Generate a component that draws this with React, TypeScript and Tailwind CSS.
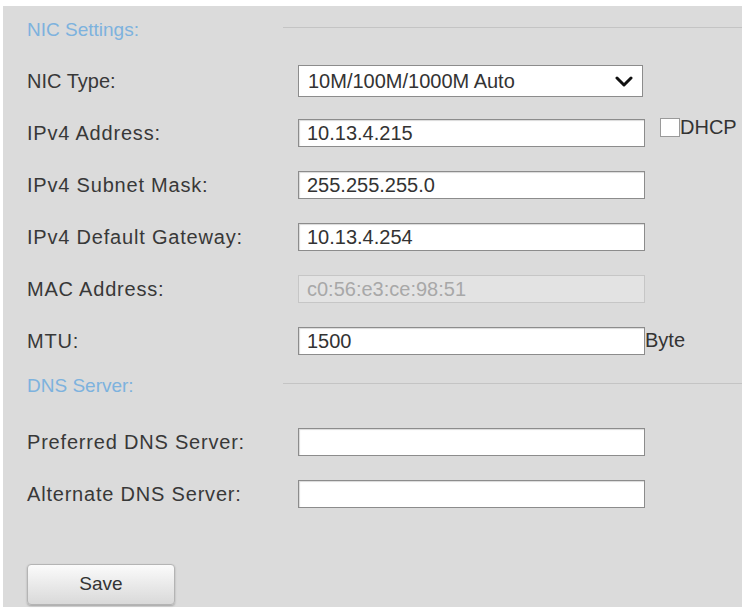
import React from 'react';

const font = { fontFamily: '"Liberation Sans", Arial, sans-serif' };

function SectionHeader({ title, className = '' }: { title: string; className?: string }) {
  return (
    <div className={`flex items-center ${className}`}>
      <div className="w-[256px] text-[19px] text-[#7db2de]">{title}</div>
      <div className="flex-1 h-px bg-[#c4c4c4] mb-[6px]" />
    </div>
  );
}

function Row({ label, wide = true, children }: { label: string; wide?: boolean; children: React.ReactNode }) {
  return (
    <div className="flex items-center h-[52px]">
      <div className={`w-[271px] text-[20px] text-[#383838] ${wide ? 'tracking-[0.8px]' : ''}`}>{label}</div>
      {children}
    </div>
  );
}

function TextBox({ value = '', disabled = false }: { value?: string; disabled?: boolean }) {
  return (
    <div
      className={
        disabled
          ? 'w-[347px] h-[28px] flex items-center pl-[8px] border border-[#c6c6c6] bg-[#e3e3e3] text-[20px] text-[#a8a8a8]'
          : 'w-[347px] h-[28px] flex items-center pl-[8px] border border-[#8c8c8c] bg-white shadow-[inset_1px_1px_1px_rgba(0,0,0,0.15)] text-[20px] text-[#333]'
      }
    >
      {value}
    </div>
  );
}

export default function App() {
  return (
    <div className="w-[745px] h-[610px] bg-white pt-[6px] pl-[3px]" style={font}>
      <div className="w-[739px] h-[601px] bg-[#dbdbdb] pl-[24px]">
        {/* NIC Settings */}
        <SectionHeader title="NIC Settings:" className="h-[49px]" />

        <Row label="NIC Type:" wide={false}>
          <div className="w-[345px] h-[32px] flex items-center justify-between pl-[9px] pr-[8px] border border-[#8c8c8c] bg-white text-[20px] text-[#333]">
            <span>10M/100M/1000M Auto</span>
            <svg width="18" height="11" viewBox="0 0 18 11" className="mr-[1px]">
              <path d="M2 2 L9 9 L16 2" fill="none" stroke="#111" strokeWidth="3" strokeLinecap="round" strokeLinejoin="round" />
            </svg>
          </div>
        </Row>

        <Row label="IPv4 Address:">
          <TextBox value="10.13.4.215" />
          <div className="flex items-end ml-[15px] mb-[11px]">
            <div className="w-[20px] h-[19px] bg-white border border-[#9a9a9a]" />
            <span className="text-[20px] leading-[19px] text-[#333]">DHCP</span>
          </div>
        </Row>

        <Row label="IPv4 Subnet Mask:">
          <TextBox value="255.255.255.0" />
        </Row>

        <Row label="IPv4 Default Gateway:">
          <TextBox value="10.13.4.254" />
        </Row>

        <Row label="MAC Address:">
          <TextBox value="c0:56:e3:ce:98:51" disabled />
        </Row>

        <Row label="MTU:">
          <TextBox value="1500" />
          <span className="text-[20px] text-[#333] mb-[2px]">Byte</span>
        </Row>

        {/* DNS Server */}
        <SectionHeader title="DNS Server:" className="h-[38px]" />

        <div className="mt-[11px]">
          <Row label="Preferred DNS Server:">
            <TextBox />
          </Row>
          <Row label="Alternate DNS Server:">
            <TextBox />
          </Row>
        </div>

        <button className="mt-[44px] w-[148px] h-[41px] rounded-[4px] border border-[#b4b4b4] bg-gradient-to-b from-[#fbfbfb] to-[#d9d9d9] shadow-[0_1px_2px_rgba(0,0,0,0.25)] text-[19px] text-[#333]">
          Save
        </button>
      </div>
    </div>
  );
}
